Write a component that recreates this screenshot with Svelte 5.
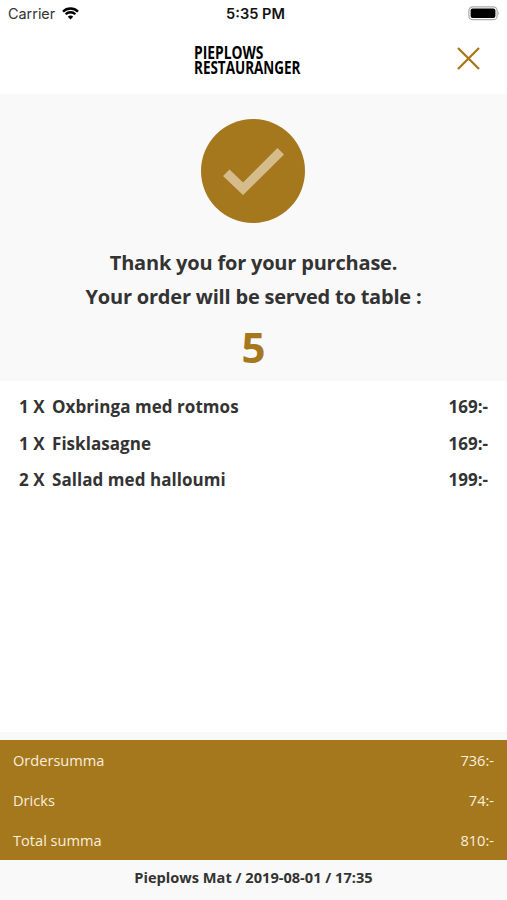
<script lang="ts">
	type Item = { amount: number; name: string; price: number };
	type Summary = { label: string; value: number };

	const table: number = 5;

	const items: Item[] = [
		{ amount: 1, name: 'Oxbringa med rotmos', price: 169 },
		{ amount: 1, name: 'Fisklasagne', price: 169 },
		{ amount: 2, name: 'Sallad med halloumi', price: 199 }
	];

	const summary: Summary[] = [
		{ label: 'Ordersumma', value: 736 },
		{ label: 'Dricks', value: 74 },
		{ label: 'Total summa', value: 810 }
	];
</script>

<div class="screen">
	<div class="status">
		<div class="status__carrier">
			<span>Carrier</span>
			<svg class="status__wifi" width="17" height="13" viewBox="0 0 17 13">
				<path d="M1 4.6A10.6 10.6 0 0 1 16 4.6" />
				<path d="M3.6 7.3A6.9 6.9 0 0 1 13.4 7.3" />
				<path class="status__wifi-dot" d="M8.5 12.5L5.8 9.7A3.9 3.9 0 0 1 11.2 9.7Z" />
			</svg>
		</div>
		<span class="status__time">5:35 PM</span>
		<svg class="status__battery" width="33" height="15" viewBox="0 0 33 15">
			<rect x=".9" y=".9" width="28.2" height="12.8" rx="3.8" fill="#fff" stroke="#aaa" stroke-width="1.2" />
			<rect x="2.6" y="2.6" width="24.8" height="9.4" rx="2" />
			<path d="M30.3 5.3Q32 7.2 30.3 9.3Z" fill="#999" />
		</svg>
	</div>

	<header class="header">
		<svg class="header__logo" width="112" height="56" viewBox="0 0 112 56">
			<text x="2" y="27.5" textLength="69.5" lengthAdjust="spacingAndGlyphs">PIEPLOWS</text>
			<text x="2" y="43.3" textLength="106.5" lengthAdjust="spacingAndGlyphs">RESTAURANGER</text>
		</svg>
		<button class="header__close" aria-label="Close">
			<svg width="23" height="23" viewBox="0 0 23 23">
				<path d="M1 1L22 22M22 1L1 22" />
			</svg>
		</button>
	</header>

	<section class="confirmation">
		<svg class="confirmation__icon" width="104" height="104" viewBox="0 0 104 104">
			<circle cx="52" cy="52" r="52" fill="#a6781d" />
			<path d="M22 57L28.5 50.5L42 63.5L76.5 29L83 35.5L42 76Z" fill="#d6bc8b" />
		</svg>
		<p class="confirmation__text">Thank you for your purchase.</p>
		<p class="confirmation__text">Your order will be served to table :</p>
		<p class="confirmation__table">{table}</p>
	</section>

	<ul class="items">
		{#each items as item}
			<li class="items__row">
				<span class="items__amount">{item.amount} X</span>
				<span class="items__name">{item.name}</span>
				<span class="items__price">{item.price}:-</span>
			</li>
		{/each}
	</ul>

	<dl class="summary">
		{#each summary as row}
			<div class="summary__row">
				<dt>{row.label}</dt>
				<dd>{row.value}:-</dd>
			</div>
		{/each}
	</dl>

	<footer class="footer">Pieplows Mat / 2019-08-01 / 17:35</footer>
</div>

<style>
	:global(body) {
		background: #fff;
	}

	.screen {
		display: flex;
		flex-direction: column;
		height: 900px;
		overflow: hidden;
		color: #333;
		font-family: 'Open Sans', sans-serif;
	}

	.status {
		display: grid;
		grid-template-columns: 1fr auto 1fr;
		align-items: center;
		height: 27px;
		padding: 0 6px 0 8px;
		color: #111;
		font-family: Inter, sans-serif;
		font-size: 14px;
	}

	.status__carrier {
		display: flex;
		align-items: center;
		gap: 7px;
		color: #333;
		font-size: 14.4px;
	}

	.status__wifi {
		fill: none;
		stroke: #000;
		stroke-width: 2.3;
	}

	.status__wifi-dot {
		fill: #000;
		stroke: none;
	}

	.status__time {
		padding-left: 2px;
		font-size: 14.6px;
		font-weight: 600;
	}

	.status__battery {
		justify-self: end;
	}

	.header {
		display: grid;
		grid-template-columns: 1fr auto 1fr;
		align-items: center;
		box-sizing: border-box;
		height: 67px;
		padding: 0 27px 4px 15px;
	}

	.header__logo {
		grid-column: 2;
		font-size: 18px;
		font-weight: 700;
	}

	.header__close {
		justify-self: end;
		display: flex;
		padding: 0;
		border: none;
		background: none;
	}

	.header__close path {
		stroke: #a9771b;
		stroke-width: 2.3;
	}

	.confirmation {
		display: flex;
		flex-direction: column;
		align-items: center;
		box-sizing: border-box;
		height: 287px;
		padding-top: 25px;
		background: #f9f9f9;
	}

	.confirmation__icon {
		margin: 0 1px 23px 0;
	}

	.confirmation__text {
		margin: 0;
		font-size: 20px;
		font-weight: 700;
		letter-spacing: -0.2px;
		line-height: 34px;
	}

	.confirmation__table {
		margin: 0;
		color: #a6781d;
		font-size: 42px;
		font-weight: 700;
		line-height: 66px;
	}

	.items {
		flex: 1;
		margin: 0;
		padding: 8px 19px 0;
		list-style: none;
		font-size: 17px;
		font-weight: 700;
	}

	.items__row {
		display: flex;
		height: 36.5px;
		line-height: 36px;
	}

	.items__amount {
		width: 33px;
		white-space: nowrap;
	}

	.items__name {
		flex: 1;
		letter-spacing: 0.05px;
	}

	.summary {
		margin: 0;
		border-top: 8px solid #f9f9f9;
		background: #a6781d;
		color: #f8efdd;
		font-size: 14.6px;
	}

	.summary__row {
		display: flex;
		justify-content: space-between;
		height: 40px;
		padding: 0 13px;
		line-height: 40px;
	}

	.summary__row dd {
		margin: 0;
	}

	.footer {
		height: 40px;
		background: #f9f9f9;
		font-size: 14.6px;
		font-weight: 700;
		line-height: 35px;
		text-align: center;
	}
</style>
